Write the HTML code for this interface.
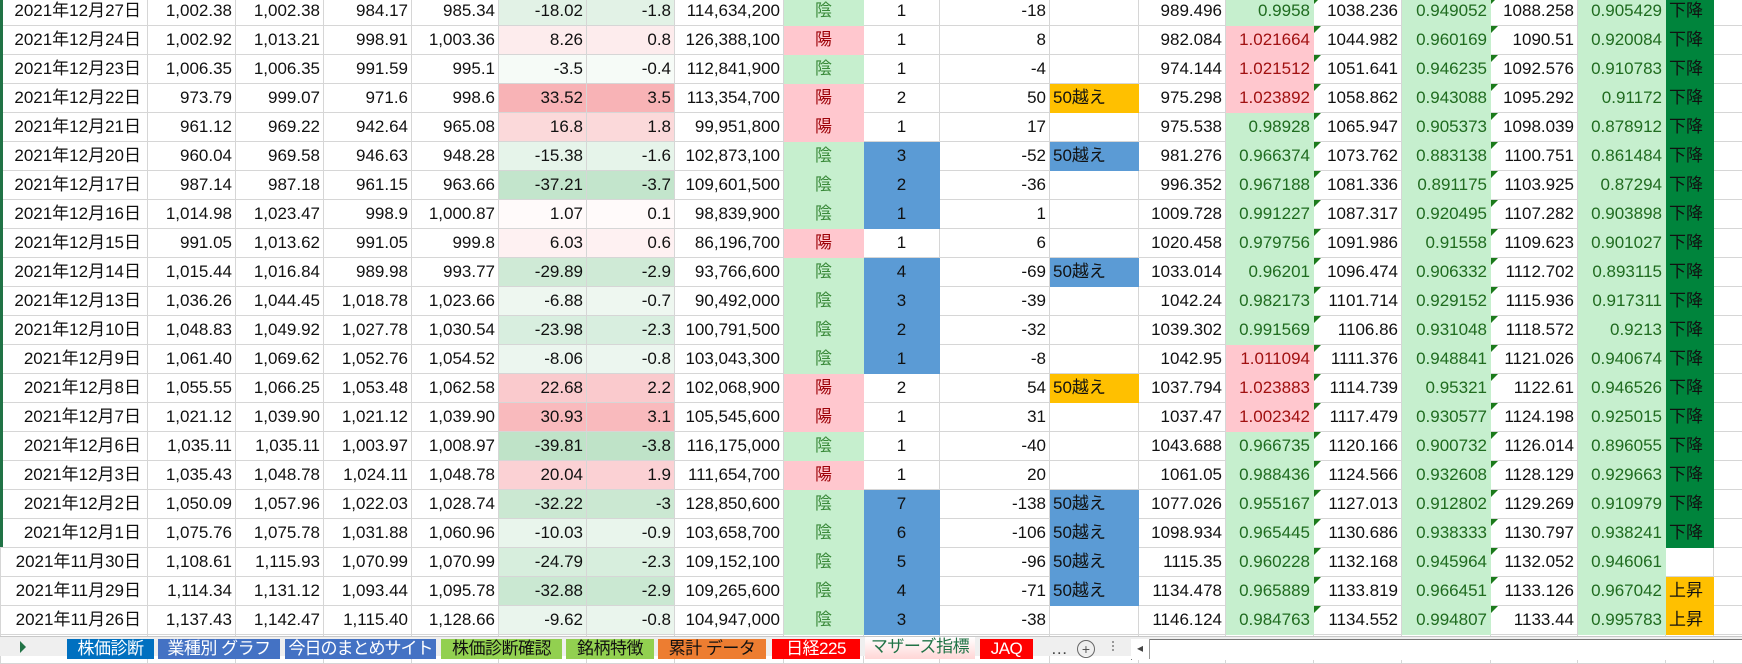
<!DOCTYPE html>
<html><head><meta charset="utf-8">
<style>
html,body{margin:0;padding:0;width:1742px;height:655px;overflow:hidden;background:#fff;
font-family:"Liberation Sans","Noto Sans CJK JP",sans-serif;}
table{position:absolute;left:0;top:-4px;border-collapse:collapse;table-layout:fixed;width:1742px;}
td{height:28px;border:1px solid #d6d6d6;padding:0 3px 0 0;font-size:17px;text-align:right;white-space:nowrap;overflow:hidden;color:#111;position:relative;line-height:28px;}
td.d{padding-right:6px}
td.c{text-align:center;padding:0}
td.l{text-align:left;padding:0 0 0 3px}
.in{background:#c6efce;color:#3a8a3a;border-color:#c6efce!important}
.yo{background:#ffc7ce;color:#9c0006;border-color:#ffc7ce!important}
.g{background:#c6efce;color:#1f6b1f;border-color:#c6efce!important}
.p{background:#ffc7ce;color:#a01010;border-color:#ffc7ce!important}
.b{background:#5b9bd5;border-color:#5b9bd5!important}
.o{background:#ffc000;border-color:#ffc000!important}
.dg{background:#00843c;color:#111;border-color:#00843c!important}
.t::before{content:"";position:absolute;left:0;top:0;border-top:7px solid #1b7a1b;border-right:7px solid transparent}
#lg{position:absolute;left:0;top:0;width:3px;height:547px;background:#217346}
#tb{position:absolute;left:0;top:636px;width:1742px;height:19px;background:#efefef;border-top:1px solid #c8c8c8}
.tab{position:absolute;top:2px;height:20px;font-size:17px;letter-spacing:-0.5px;line-height:20px;text-align:center;overflow:hidden;white-space:nowrap}
</style></head><body>
<table>
<colgroup><col style="width:147px"><col style="width:88px"><col style="width:88px"><col style="width:88px"><col style="width:87px"><col style="width:88px"><col style="width:88px"><col style="width:109px"><col style="width:80px"><col style="width:76px"><col style="width:110px"><col style="width:89px"><col style="width:87px"><col style="width:88px"><col style="width:88px"><col style="width:89px"><col style="width:87px"><col style="width:88px"><col style="width:48px"><col style="width:29px"></colgroup>
<tr><td class="d">2021年12月27日</td><td>1,002.38</td><td>1,002.38</td><td>984.17</td><td>985.34</td><td style="background:#e2f2e6">-18.02</td><td style="background:#e2f2e6">-1.8</td><td>114,634,200</td><td class="c in">陰</td><td class="c">1</td><td>-18</td><td></td><td>989.496</td><td class="g">0.9958</td><td class="t">1038.236</td><td class="g">0.949052</td><td class="t">1088.258</td><td class="g">0.905429</td><td class="l dg">下降</td><td></td></tr>
<tr><td class="d">2021年12月24日</td><td>1,002.92</td><td>1,013.21</td><td>998.91</td><td>1,003.36</td><td style="background:#fdeced">8.26</td><td style="background:#fdeced">0.8</td><td>126,388,100</td><td class="c yo">陽</td><td class="c">1</td><td>8</td><td></td><td>982.084</td><td class="p">1.021664</td><td class="t">1044.982</td><td class="g">0.960169</td><td class="t">1090.51</td><td class="g">0.920084</td><td class="l dg">下降</td><td></td></tr>
<tr><td class="d">2021年12月23日</td><td>1,006.35</td><td>1,006.35</td><td>991.59</td><td>995.1</td><td style="background:#f6fbf7">-3.5</td><td style="background:#f6fbf7">-0.4</td><td>112,841,900</td><td class="c in">陰</td><td class="c">1</td><td>-4</td><td></td><td>974.144</td><td class="p">1.021512</td><td class="t">1051.641</td><td class="g">0.946235</td><td class="t">1092.576</td><td class="g">0.910783</td><td class="l dg">下降</td><td></td></tr>
<tr><td class="d">2021年12月22日</td><td>973.79</td><td>999.07</td><td>971.6</td><td>998.6</td><td style="background:#f8b3b6">33.52</td><td style="background:#f8b3b6">3.5</td><td>113,354,700</td><td class="c yo">陽</td><td class="c">2</td><td>50</td><td class="l o">50越え</td><td>975.298</td><td class="p">1.023892</td><td class="t">1058.862</td><td class="g">0.943088</td><td class="t">1095.292</td><td class="g">0.91172</td><td class="l dg">下降</td><td></td></tr>
<tr><td class="d">2021年12月21日</td><td>961.12</td><td>969.22</td><td>942.64</td><td>965.08</td><td style="background:#fbd9da">16.8</td><td style="background:#fbd9da">1.8</td><td>99,951,800</td><td class="c yo">陽</td><td class="c">1</td><td>17</td><td></td><td>975.538</td><td class="g">0.98928</td><td class="t">1065.947</td><td class="g">0.905373</td><td class="t">1098.039</td><td class="g">0.878912</td><td class="l dg">下降</td><td></td></tr>
<tr><td class="d">2021年12月20日</td><td>960.04</td><td>969.58</td><td>946.63</td><td>948.28</td><td style="background:#e6f4ea">-15.38</td><td style="background:#e6f4ea">-1.6</td><td>102,873,100</td><td class="c in">陰</td><td class="c b">3</td><td>-52</td><td class="l b">50越え</td><td>981.276</td><td class="g">0.966374</td><td class="t">1073.762</td><td class="g">0.883138</td><td class="t">1100.751</td><td class="g">0.861484</td><td class="l dg">下降</td><td></td></tr>
<tr><td class="d">2021年12月17日</td><td>987.14</td><td>987.18</td><td>961.15</td><td>963.66</td><td style="background:#c3e5cc">-37.21</td><td style="background:#c3e5cc">-3.7</td><td>109,601,500</td><td class="c in">陰</td><td class="c b">2</td><td>-36</td><td></td><td>996.352</td><td class="g">0.967188</td><td class="t">1081.336</td><td class="g">0.891175</td><td class="t">1103.925</td><td class="g">0.87294</td><td class="l dg">下降</td><td></td></tr>
<tr><td class="d">2021年12月16日</td><td>1,014.98</td><td>1,023.47</td><td>998.9</td><td>1,000.87</td><td style="background:#fffafa">1.07</td><td style="background:#fffafa">0.1</td><td>98,839,900</td><td class="c in">陰</td><td class="c b">1</td><td>1</td><td></td><td>1009.728</td><td class="g">0.991227</td><td class="t">1087.317</td><td class="g">0.920495</td><td class="t">1107.282</td><td class="g">0.903898</td><td class="l dg">下降</td><td></td></tr>
<tr><td class="d">2021年12月15日</td><td>991.05</td><td>1,013.62</td><td>991.05</td><td>999.8</td><td style="background:#fef1f2">6.03</td><td style="background:#fef1f2">0.6</td><td>86,196,700</td><td class="c yo">陽</td><td class="c">1</td><td>6</td><td></td><td>1020.458</td><td class="g">0.979756</td><td class="t">1091.986</td><td class="g">0.91558</td><td class="t">1109.623</td><td class="g">0.901027</td><td class="l dg">下降</td><td></td></tr>
<tr><td class="d">2021年12月14日</td><td>1,015.44</td><td>1,016.84</td><td>989.98</td><td>993.77</td><td style="background:#cfead6">-29.89</td><td style="background:#cfead6">-2.9</td><td>93,766,600</td><td class="c in">陰</td><td class="c b">4</td><td>-69</td><td class="l b">50越え</td><td>1033.014</td><td class="g">0.96201</td><td class="t">1096.474</td><td class="g">0.906332</td><td class="t">1112.702</td><td class="g">0.893115</td><td class="l dg">下降</td><td></td></tr>
<tr><td class="d">2021年12月13日</td><td>1,036.26</td><td>1,044.45</td><td>1,018.78</td><td>1,023.66</td><td style="background:#eef7f0">-6.88</td><td style="background:#eef7f0">-0.7</td><td>90,492,000</td><td class="c in">陰</td><td class="c b">3</td><td>-39</td><td></td><td>1042.24</td><td class="g">0.982173</td><td class="t">1101.714</td><td class="g">0.929152</td><td class="t">1115.936</td><td class="g">0.917311</td><td class="l dg">下降</td><td></td></tr>
<tr><td class="d">2021年12月10日</td><td>1,048.83</td><td>1,049.92</td><td>1,027.78</td><td>1,030.54</td><td style="background:#d8eedf">-23.98</td><td style="background:#d8eedf">-2.3</td><td>100,791,500</td><td class="c in">陰</td><td class="c b">2</td><td>-32</td><td></td><td>1039.302</td><td class="g">0.991569</td><td class="t">1106.86</td><td class="g">0.931048</td><td class="t">1118.572</td><td class="g">0.9213</td><td class="l dg">下降</td><td></td></tr>
<tr><td class="d">2021年12月9日</td><td>1,061.40</td><td>1,069.62</td><td>1,052.76</td><td>1,054.52</td><td style="background:#ecf6ef">-8.06</td><td style="background:#ecf6ef">-0.8</td><td>103,043,300</td><td class="c in">陰</td><td class="c b">1</td><td>-8</td><td></td><td>1042.95</td><td class="p">1.011094</td><td class="t">1111.376</td><td class="g">0.948841</td><td class="t">1121.026</td><td class="g">0.940674</td><td class="l dg">下降</td><td></td></tr>
<tr><td class="d">2021年12月8日</td><td>1,055.55</td><td>1,066.25</td><td>1,053.48</td><td>1,062.58</td><td style="background:#facacd">22.68</td><td style="background:#facacd">2.2</td><td>102,068,900</td><td class="c yo">陽</td><td class="c">2</td><td>54</td><td class="l o">50越え</td><td>1037.794</td><td class="p">1.023883</td><td class="t">1114.739</td><td class="g">0.95321</td><td class="t">1122.61</td><td class="g">0.946526</td><td class="l dg">下降</td><td></td></tr>
<tr><td class="d">2021年12月7日</td><td>1,021.12</td><td>1,039.90</td><td>1,021.12</td><td>1,039.90</td><td style="background:#f9babd">30.93</td><td style="background:#f9babd">3.1</td><td>105,545,600</td><td class="c yo">陽</td><td class="c">1</td><td>31</td><td></td><td>1037.47</td><td class="p">1.002342</td><td class="t">1117.479</td><td class="g">0.930577</td><td class="t">1124.198</td><td class="g">0.925015</td><td class="l dg">下降</td><td></td></tr>
<tr><td class="d">2021年12月6日</td><td>1,035.11</td><td>1,035.11</td><td>1,003.97</td><td>1,008.97</td><td style="background:#bfe3c8">-39.81</td><td style="background:#bfe3c8">-3.8</td><td>116,175,000</td><td class="c in">陰</td><td class="c">1</td><td>-40</td><td></td><td>1043.688</td><td class="g">0.966735</td><td class="t">1120.166</td><td class="g">0.900732</td><td class="t">1126.014</td><td class="g">0.896055</td><td class="l dg">下降</td><td></td></tr>
<tr><td class="d">2021年12月3日</td><td>1,035.43</td><td>1,048.78</td><td>1,024.11</td><td>1,048.78</td><td style="background:#fbd1d4">20.04</td><td style="background:#fbd1d4">1.9</td><td>111,654,700</td><td class="c yo">陽</td><td class="c">1</td><td>20</td><td></td><td>1061.05</td><td class="g">0.988436</td><td class="t">1124.566</td><td class="g">0.932608</td><td class="t">1128.129</td><td class="g">0.929663</td><td class="l dg">下降</td><td></td></tr>
<tr><td class="d">2021年12月2日</td><td>1,050.09</td><td>1,057.96</td><td>1,022.03</td><td>1,028.74</td><td style="background:#cbe8d2">-32.22</td><td style="background:#cbe8d2">-3</td><td>128,850,600</td><td class="c in">陰</td><td class="c b">7</td><td>-138</td><td class="l b">50越え</td><td>1077.026</td><td class="g">0.955167</td><td class="t">1127.013</td><td class="g">0.912802</td><td class="t">1129.269</td><td class="g">0.910979</td><td class="l dg">下降</td><td></td></tr>
<tr><td class="d">2021年12月1日</td><td>1,075.76</td><td>1,075.78</td><td>1,031.88</td><td>1,060.96</td><td style="background:#e9f5ec">-10.03</td><td style="background:#e9f5ec">-0.9</td><td>103,658,700</td><td class="c in">陰</td><td class="c b">6</td><td>-106</td><td class="l b">50越え</td><td>1098.934</td><td class="g">0.965445</td><td class="t">1130.686</td><td class="g">0.938333</td><td class="t">1130.797</td><td class="g">0.938241</td><td class="l dg">下降</td><td></td></tr>
<tr><td class="d">2021年11月30日</td><td>1,108.61</td><td>1,115.93</td><td>1,070.99</td><td>1,070.99</td><td style="background:#d7eedd">-24.79</td><td style="background:#d7eedd">-2.3</td><td>109,152,100</td><td class="c in">陰</td><td class="c b">5</td><td>-96</td><td class="l b">50越え</td><td>1115.35</td><td class="g">0.960228</td><td class="t">1132.168</td><td class="g">0.945964</td><td class="t">1132.052</td><td class="g">0.946061</td><td></td><td></td></tr>
<tr><td class="d">2021年11月29日</td><td>1,114.34</td><td>1,131.12</td><td>1,093.44</td><td>1,095.78</td><td style="background:#cae8d2">-32.88</td><td style="background:#cae8d2">-2.9</td><td>109,265,600</td><td class="c in">陰</td><td class="c b">4</td><td>-71</td><td class="l b">50越え</td><td>1134.478</td><td class="g">0.965889</td><td class="t">1133.819</td><td class="g">0.966451</td><td class="t">1133.126</td><td class="g">0.967042</td><td class="l o">上昇</td><td></td></tr>
<tr><td class="d">2021年11月26日</td><td>1,137.43</td><td>1,142.47</td><td>1,115.40</td><td>1,128.66</td><td style="background:#eaf5ed">-9.62</td><td style="background:#eaf5ed">-0.8</td><td>104,947,000</td><td class="c in">陰</td><td class="c b">3</td><td>-38</td><td></td><td>1146.124</td><td class="g">0.984763</td><td class="t">1134.552</td><td class="g">0.994807</td><td class="t">1133.44</td><td class="g">0.995783</td><td class="l o">上昇</td><td></td></tr>
<tr><td></td><td></td><td></td><td></td><td></td><td></td><td></td><td></td><td></td><td></td><td></td><td></td><td></td><td></td><td></td><td></td><td></td><td></td><td></td><td></td></tr>
</table>
<div id="lg"></div>
<div id="tb">
<div style="position:absolute;left:20px;top:4px;width:0;height:0;border-left:6px solid #217346;border-top:6px solid transparent;border-bottom:6px solid transparent"></div>
<div class="tab" style="left:67px;width:87px;background:#0070c0;color:#fff">株価診断</div>
<div class="tab" style="left:158px;width:122px;background:#4472c4;color:#fff">業種別 グラフ</div>
<div class="tab" style="left:285px;width:151px;background:#4472c4;color:#fff;letter-spacing:-1px">今日のまとめサイト</div>
<div class="tab" style="left:441px;width:121px;background:#92d050;color:#111">株価診断確認</div>
<div class="tab" style="left:566px;width:88px;background:#92d050;color:#111">銘柄特徴</div>
<div class="tab" style="left:658px;width:108px;background:#ed7d31;color:#111">累計 データ</div>
<div class="tab" style="left:772px;width:88px;background:#ff0000;color:#fff">日経225</div>
<div class="tab" style="left:865px;width:110px;top:0;height:22px;background:linear-gradient(#fff,#ffd6d6);color:#217346">マザーズ指標</div>
<div class="tab" style="left:980px;width:53px;background:#ff0000;color:#fff">JAQ</div>
<div class="tab" style="left:1049px;width:20px;color:#444">…</div>
<div style="position:absolute;left:1077px;top:3px;width:16px;height:16px;border:1px solid #666;border-radius:50%;font-size:14px;line-height:16px;text-align:center;color:#555">+</div>
<div style="position:absolute;left:1112px;top:4px;width:3px;height:10px;border-left:2px dotted #999"></div>
<div style="position:absolute;left:1131px;top:2px;width:611px;height:20px;background:#fff;border-top:1px solid #777;border-left:1px solid #777"></div>
<div style="position:absolute;left:1131px;top:2px;width:18px;height:20px;border-right:1px solid #999;background:#fff;font-size:12px;line-height:18px;text-align:center;color:#444">◂</div>
</div>
</body></html>
